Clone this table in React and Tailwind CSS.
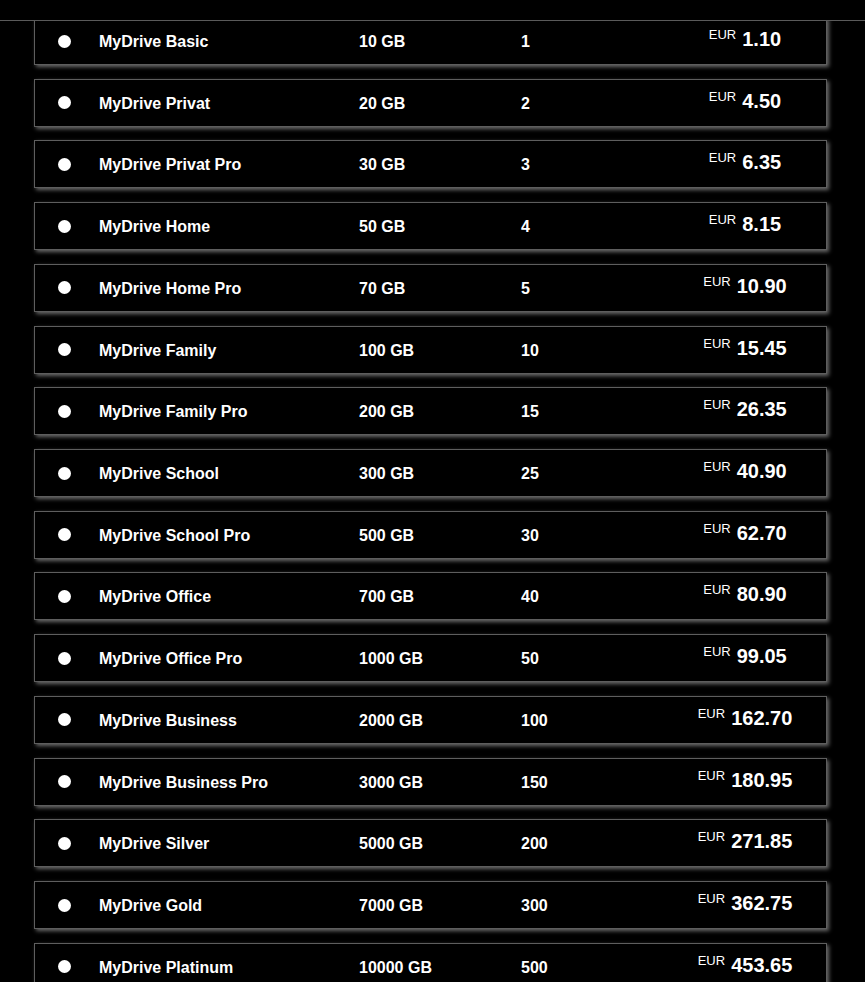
const plans = [
  ["MyDrive Basic", "10 GB", "1", "1.10"],
  ["MyDrive Privat", "20 GB", "2", "4.50"],
  ["MyDrive Privat Pro", "30 GB", "3", "6.35"],
  ["MyDrive Home", "50 GB", "4", "8.15"],
  ["MyDrive Home Pro", "70 GB", "5", "10.90"],
  ["MyDrive Family", "100 GB", "10", "15.45"],
  ["MyDrive Family Pro", "200 GB", "15", "26.35"],
  ["MyDrive School", "300 GB", "25", "40.90"],
  ["MyDrive School Pro", "500 GB", "30", "62.70"],
  ["MyDrive Office", "700 GB", "40", "80.90"],
  ["MyDrive Office Pro", "1000 GB", "50", "99.05"],
  ["MyDrive Business", "2000 GB", "100", "162.70"],
  ["MyDrive Business Pro", "3000 GB", "150", "180.95"],
  ["MyDrive Silver", "5000 GB", "200", "271.85"],
  ["MyDrive Gold", "7000 GB", "300", "362.75"],
  ["MyDrive Platinum", "10000 GB", "500", "453.65"],
];

function PlanRow({ name, size, users, price }) {
  return (
    <div className="h-[48px] w-[793px] ml-[34px] shrink-0 border border-[#5e5e5e] bg-black shadow-[2px_2px_4px_#6a6a6a] flex items-center text-white">
      {/* radio */}
      <div className="w-[64px] pl-[23px] flex items-center">
        <span className="block w-[13px] h-[13px] rounded-full bg-white" />
      </div>
      <div className="w-[260px] pt-[2px] font-bold text-[16px]">{name}</div>
      <div className="w-[162px] pt-[2px] font-bold text-[16px]">{size}</div>
      <div className="w-[144px] pt-[2px] font-bold text-[16px]">{users}</div>
      <div className="w-[160px] flex justify-center items-start pb-[4px]">
        <span className="text-[13px] leading-none mt-[-1px] mr-[6px]">EUR</span>
        <span className="text-[20px] font-bold leading-none">{price}</span>
      </div>
    </div>
  );
}

export default function App() {
  return (
    <div className="relative h-[982px] overflow-hidden bg-black font-['Liberation_Sans',Arial,sans-serif]">
      {/* top bar overlaps the scrolled list */}
      <div className="absolute top-0 left-0 right-0 z-10 h-[21px] bg-black border-b border-[#5a5a5a]" />

      <div className="pt-[17px] flex flex-col gap-[13.73px]">
        {plans.map(([name, size, users, price]) => (
          <PlanRow key={name} name={name} size={size} users={users} price={price} />
        ))}
      </div>
    </div>
  );
}
